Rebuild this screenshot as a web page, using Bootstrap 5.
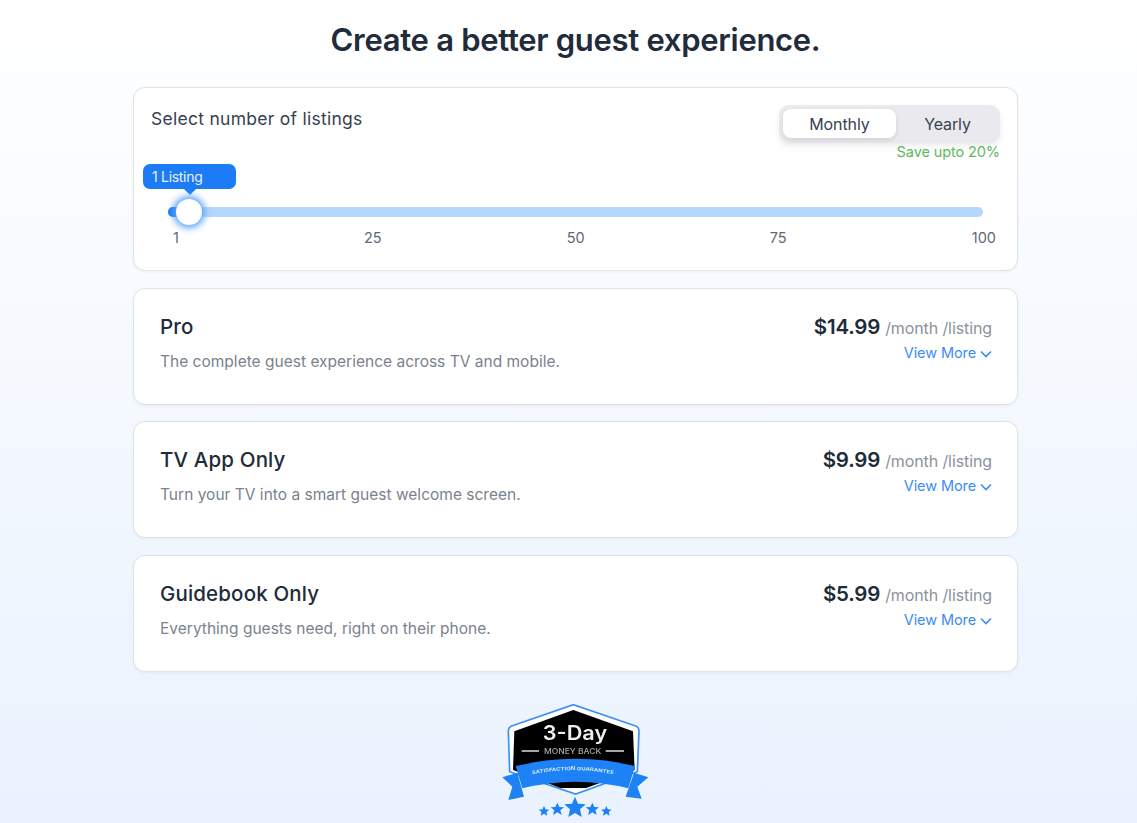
<!DOCTYPE html>
<html lang="en"><head><meta charset="utf-8"><title>Pricing</title>
<link href="https://cdn.jsdelivr.net/npm/bootstrap@5.3.0/dist/css/bootstrap.min.css" rel="stylesheet">
<style>
html,body{height:100%}
body{font-family:"Inter","Noto Sans",sans-serif;background:linear-gradient(180deg,#fff 0,#e9f2fe 100%);color:#212b3a;overflow:hidden}
.shell{width:885px;margin-left:133px}
.title{font-size:31px;font-weight:600;line-height:40px;padding-top:20px;margin:0 0 27px;text-align:center;letter-spacing:-.3px}
.panel{background:#fff;border:1px solid #dfe2e6;border-radius:12px;box-shadow:0 1px 3px rgba(30,50,80,.06)}
.slider-panel{height:184px;padding:20px 17px 0;position:relative;margin-bottom:17px}
.sel-label{font-size:17.5px;font-weight:400;color:#374151;line-height:22px;letter-spacing:.27px}
.toggle{width:221px;height:38px;border-radius:10px;background:#eaeaee;padding:4px;margin-top:-3px;box-shadow:0 3px 6px rgba(0,0,0,.08)}
.toggle span{font-size:16px;line-height:31px;text-align:center;color:#374151;border-radius:8px;letter-spacing:-.1px}
.t-on{flex:0 0 113px;height:29px;line-height:29px;background:#fff;box-shadow:0 2px 5px rgba(0,0,0,.1)}
.t-off{flex:0 0 100px;padding-left:3px}
.save{font-size:14.5px;color:#5cb85c;line-height:18px;text-align:right;letter-spacing:-.1px}
.track{height:10px;background:#b5d7fd;border-radius:5px;margin:46px 17px 0 17px;position:relative}
.fill{position:absolute;left:0;top:0;width:20px;height:10px;background:#1b7cf5;border-radius:5px}
.thumb{position:absolute;left:8px;top:-8px;width:26px;height:26px;border-radius:50%;background:#fff;box-shadow:0 0 7px 3px #5aa4fb}
.bubble{position:absolute;left:9px;top:76px;width:93px;height:25px;background:#1b7cf5;color:#e8f2ff;border-radius:7px;font-size:14px;line-height:26px;padding-left:9px;letter-spacing:-.3px}
.bubble::after{content:"";position:absolute;left:41px;top:25px;border:6px solid transparent;border-top-color:#1b7cf5;border-bottom:0}
.ticks{margin:11px 4px 0 22px;font-size:14.5px;color:#5f6877;line-height:20px}
.plan{height:117px;padding:24px 25px 0 26px;margin-bottom:16px}
.plan-mid{margin-bottom:17px}
.plan-name{font-size:20.5px;font-weight:500;line-height:28px;color:#212b3a;letter-spacing:.15px}
.plan-desc{font-size:15.5px;color:#7a828e;line-height:22px;margin-top:10px;letter-spacing:.01px}
.price{font-size:20.5px;font-weight:600;line-height:28px;letter-spacing:-.2px}
.per{font-size:16px;font-weight:400;color:#8b929c;letter-spacing:-.1px}
.more{font-size:14.5px;color:#3c8bf7;line-height:20px;margin-top:1px;letter-spacing:-.1px;text-decoration:none;display:block}
.seal{margin-top:32px}
.seal svg{filter:blur(.4px)}
</style></head>
<body>
<div class="shell">
<h1 class="title">Create a better guest experience.</h1>
<div class="panel slider-panel">
  <div class="d-flex justify-content-between align-items-start">
    <div class="sel-label">Select number of listings</div>
    <div>
      <div class="toggle d-flex"><span class="t-on">Monthly</span><span class="t-off">Yearly</span></div>
      <div class="save">Save upto 20%</div>
    </div>
  </div>
  <div class="bubble">1 Listing</div>
  <div class="track"><div class="fill"></div><div class="thumb"></div></div>
  <div class="ticks d-flex justify-content-between"><span>1</span><span>25</span><span>50</span><span>75</span><span>100</span></div>
</div>

<div class="panel plan d-flex justify-content-between">
  <div><div class="plan-name">Pro</div><div class="plan-desc">The complete guest experience across TV and mobile.</div></div>
  <div class="text-end"><div class="price">$14.99 <span class="per">/month /listing</span></div><a class="more" href="#">View More <svg width="12" height="8" viewBox="0 0 12 8" fill="none" stroke="#3c8bf7" stroke-width="1.6"><path d="M1 1.5 6 6.5 11 1.5"/></svg></a></div>
</div>
<div class="panel plan plan-mid d-flex justify-content-between">
  <div><div class="plan-name">TV App Only</div><div class="plan-desc">Turn your TV into a smart guest welcome screen.</div></div>
  <div class="text-end"><div class="price">$9.99 <span class="per">/month /listing</span></div><a class="more" href="#">View More <svg width="12" height="8" viewBox="0 0 12 8" fill="none" stroke="#3c8bf7" stroke-width="1.6"><path d="M1 1.5 6 6.5 11 1.5"/></svg></a></div>
</div>
<div class="panel plan d-flex justify-content-between">
  <div><div class="plan-name">Guidebook Only</div><div class="plan-desc">Everything guests need, right on their phone.</div></div>
  <div class="text-end"><div class="price">$5.99 <span class="per">/month /listing</span></div><a class="more" href="#">View More <svg width="12" height="8" viewBox="0 0 12 8" fill="none" stroke="#3c8bf7" stroke-width="1.6"><path d="M1 1.5 6 6.5 11 1.5"/></svg></a></div>
</div>

<div class="seal d-flex justify-content-center">
<svg width="150" height="116" viewBox="96 42 450 348">
  <path d="M313 44 500 108Q510 112 510 124L505 245 320 312 122 245 118 124Q118 112 128 108Z" fill="#fff" stroke="#3c8ff5" stroke-width="5"/>
  <path d="M313 60 492 124 497 240 352 294H274L132 240 136 124Z" fill="#000"/>
  <text x="318" y="150" text-anchor="middle" font-family="Inter,sans-serif" font-size="60" font-weight="600" fill="#eee" textLength="193" lengthAdjust="spacingAndGlyphs">3-Day</text>
  <path d="M158 183H210M410 183H465" stroke="#ddd" stroke-width="4"/>
  <text x="311" y="191" text-anchor="middle" font-family="Inter,sans-serif" font-size="21" font-weight="500" fill="#aaa" textLength="172" lengthAdjust="spacingAndGlyphs">MONEY BACK</text>
  <path d="M100 262 145 248 165 320 118 330 130 290Z M538 262 495 248 470 320 518 326 505 290Z" fill="#1c82f5"/>
  <path d="M140 228Q320 185 498 228L478 295Q320 255 160 295Z" fill="#1c82f5"/>
  <path id="arcline" d="M190 253Q312 228 435 253" fill="none"/>
  <text font-family="Inter,sans-serif" font-size="14" font-weight="600" fill="#e8f2ff"><textPath href="#arcline" textLength="245" lengthAdjust="spacingAndGlyphs">SATISFACTION GUARANTEE</textPath></text>
  <g fill="#1c82f5">
  <path d="M318 320l9 21 23 2-17 15 5 23-20-12-20 12 5-23-17-15 23-2z"/>
  <path d="M265 338l6 13 14 1-11 9 4 14-13-8-13 8 4-14-11-9 14-1z"/>
  <path d="M370 338l6 13 14 1-11 9 4 14-13-8-13 8 4-14-11-9 14-1z"/>
  <path d="M225 348l4.500 10 11 1-8 7 2.500 11-10-6-10 6 2.500-11-8-7 11-1z"/>
  <path d="M412 348l4.500 10 11 1-8 7 2.500 11-10-6-10 6 2.500-11-8-7 11-1z"/>
  </g>
</svg>
</div>
</div>
</body></html>
